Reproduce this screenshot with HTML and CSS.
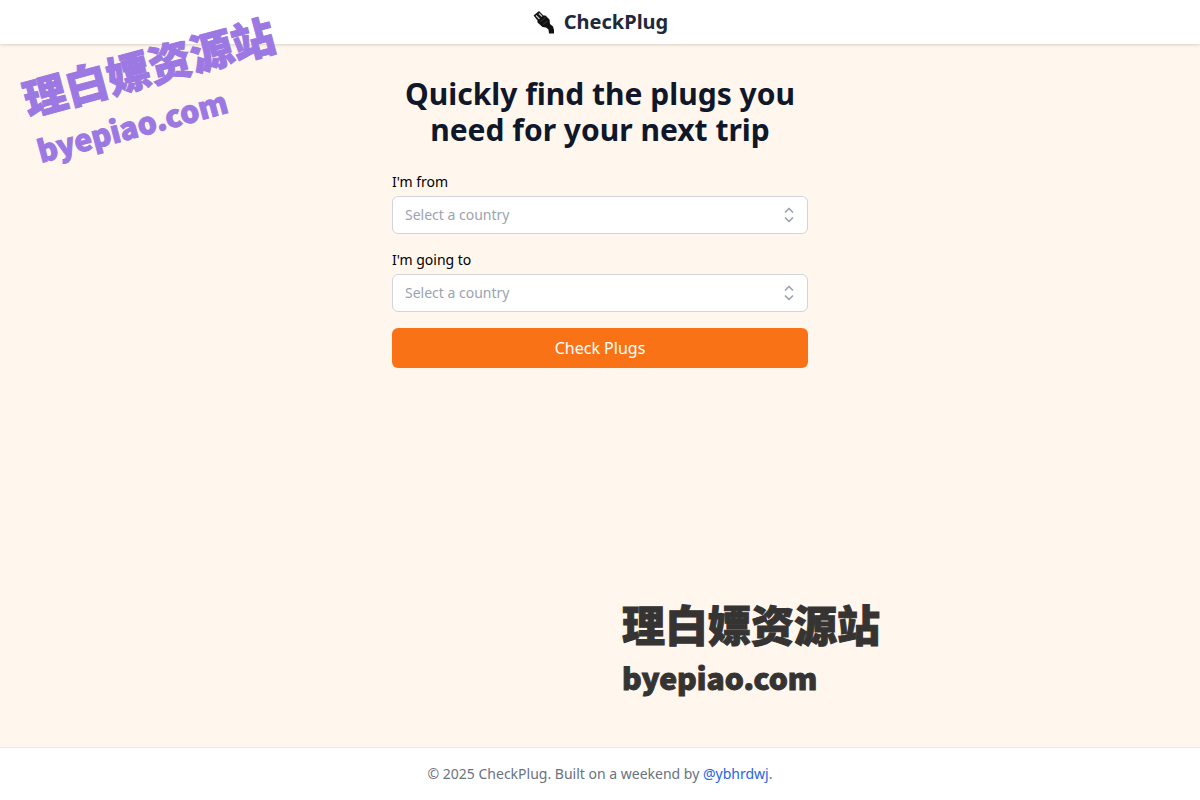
FILE: index.html
```html
<!DOCTYPE html>
<html lang="en">
<head>
  <meta charset="UTF-8">
  <meta name="viewport" content="width=device-width, initial-scale=1">
  <title>CheckPlug</title>
  <link rel="stylesheet" href="styles.css">
</head>
<body>

<header class="header">
  <a class="brand" href="#">
    <svg class="brand-icon" viewBox="0 0 24 24" aria-hidden="true">
      <path d="M1.500 5.500 7 1 11.500 5.500 13.500 5.500 17.500 9.500 18 14 21 16.500 22 20 22 23.500 17 23.500 16.500 19.500 14 17.500 10.500 17 5.500 12.500 5.500 10.500Z" fill="#111"/>
      <path d="M4 5.500 7.500 9M7 3.500 10 6.500" stroke="#ccc" stroke-width="1.200" fill="none"/>
      <path d="M8.500 11.500 13.500 7.500M11 14.500 15.500 11" stroke="#383838" stroke-width="1" fill="none"/>
    </svg>
    <span>CheckPlug</span>
  </a>
</header>

<main class="main">
  <h1 class="title">Quickly find the plugs you need for your next trip</h1>

  <form class="form">
    <div class="field">
      <label for="from">I'm from</label>
      <div class="combobox">
        <input id="from" type="text" placeholder="Select a country" autocomplete="off">
        <button class="toggle" type="button" aria-label="Show countries">
          <svg viewBox="0 0 20 20" aria-hidden="true"><path d="M6 7.500 10 3.500 14 7.500M6 12.500 10 16.500 14 12.500"/></svg>
        </button>
      </div>
    </div>

    <div class="field">
      <label for="to">I'm going to</label>
      <div class="combobox">
        <input id="to" type="text" placeholder="Select a country" autocomplete="off">
        <button class="toggle" type="button" aria-label="Show countries">
          <svg viewBox="0 0 20 20" aria-hidden="true"><path d="M6 7.500 10 3.500 14 7.500M6 12.500 10 16.500 14 12.500"/></svg>
        </button>
      </div>
    </div>

    <button class="submit" type="submit">Check Plugs</button>
  </form>
</main>

<footer class="footer">
  <p>© 2025 CheckPlug. Built on a weekend by <a href="#">@ybhrdwj</a>.</p>
</footer>

<!-- Stamps over the page -->
<div class="stamp stamp-tilted">
  <div class="stamp-name" lang="zh">理白嫖资源站</div>
  <div class="stamp-site">byepiao.com</div>
</div>
<div class="stamp stamp-dark">
  <div class="stamp-name" lang="zh">理白嫖资源站</div>
  <div class="stamp-site">byepiao.com</div>
</div>

</body>
</html>
```
FILE: styles.css
```css
* {
  box-sizing: border-box;
}

body {
  position: relative;
  display: flex;
  flex-direction: column;
  min-height: 100vh;
  margin: 0;
  font-family: "Noto Sans", "Open Sans", sans-serif;
  font-size: 14px;
  line-height: 20px;
  color: #000;
  background: #fff6ed;
}

.header {
  display: flex;
  justify-content: center;
  padding: 8px 16px;
  background: #fff;
  box-shadow: 0 1px 3px rgba(0, 0, 0, 0.16);
}

.brand {
  display: flex;
  align-items: center;
  gap: 8px;
  font-size: 20px;
  line-height: 28px;
  font-weight: 700;
  color: #1e293b;
  text-decoration: none;
}

.brand-icon {
  width: 24px;
  height: 24px;
}

.main {
  flex: 1;
  width: 100%;
  max-width: 448px;
  margin: 0 auto;
  padding: 32px 16px;
}

.title {
  margin: 0 0 24px;
  font-size: 30px;
  line-height: 36px;
  font-weight: 700;
  text-align: center;
  color: #0f172a;
}

.form {
  display: flex;
  flex-direction: column;
  gap: 16px;
}

.field {
  display: flex;
  flex-direction: column;
  gap: 4px;
}

.combobox {
  display: flex;
  align-items: center;
  height: 38px;
  border: 1px solid #d1d5db;
  border-radius: 6px;
  background: #fff;
}

.combobox input {
  flex: 1;
  min-width: 0;
  padding: 8px 12px;
  border: 0;
  outline: 0;
  background: transparent;
  font: inherit;
}

.combobox input::placeholder {
  color: #9ca3af;
}

.toggle {
  display: flex;
  padding: 8px;
  border: 0;
  background: transparent;
}

.toggle svg {
  width: 20px;
  height: 20px;
  fill: none;
  stroke: #9ca3af;
  stroke-width: 1.7;
  stroke-linejoin: round;
}

.submit {
  height: 40px;
  border: 0;
  border-radius: 6px;
  background: #f97316;
  color: #fff;
  font: inherit;
  font-size: 16px;
}

.footer {
  padding: 16px;
  border-top: 1px solid #e5e7eb;
  background: #fff;
  text-align: center;
  color: #6b7280;
}

.footer p {
  margin: 0;
}

.footer a {
  color: #2563eb;
  text-decoration: none;
}

.stamp {
  position: absolute;
  font-family: "Noto Sans CJK SC", sans-serif;
  font-weight: 900;
  white-space: nowrap;
  pointer-events: none;
  -webkit-text-stroke: 1px currentColor;
}

.stamp-name {
  font-size: 43px;
  line-height: 56px;
}

.stamp-site {
  font-size: 30px;
  line-height: 52px;
}

.stamp-tilted {
  top: 36px;
  left: 26px;
  color: #9c78e3;
  transform: rotate(-15deg);
}

.stamp-dark {
  top: 595px;
  left: 622px;
  color: #363432;
}
```
